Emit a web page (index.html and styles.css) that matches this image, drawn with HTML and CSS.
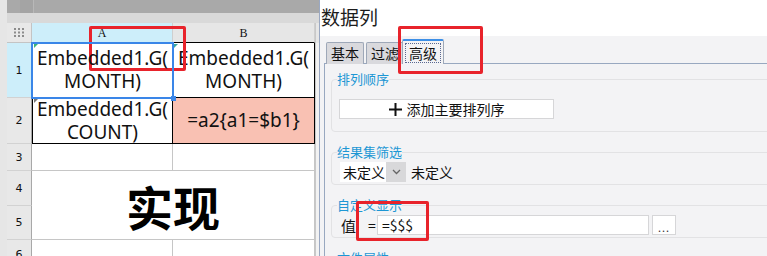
FILE: index.html
```html
<!DOCTYPE html>
<html lang="zh">
<head>
  <meta charset="UTF-8" />
  <title>数据列</title>
  <link rel="stylesheet" href="styles.css">
</head>
<body>
  <div class="app">
    <div class="strip"></div>

    <div class="sheet">
      <div class="toolbar"><span class="tb-seg"></span></div>
      <div class="subbar"></div>
      <div class="grid">
        <div class="corner">
          <svg width="10" height="9" viewBox="0 0 10 9">
            <g fill="#8c8c8c">
              <rect x="0" y="0" width="2" height="2"/><rect x="4" y="0" width="2" height="2"/><rect x="8" y="0" width="2" height="2"/>
              <rect x="0" y="3.5" width="2" height="2"/><rect x="4" y="3.5" width="2" height="2"/><rect x="8" y="3.5" width="2" height="2"/>
              <rect x="0" y="7" width="2" height="2"/><rect x="4" y="7" width="2" height="2"/><rect x="8" y="7" width="2" height="2"/>
            </g>
          </svg>
        </div>
        <div class="colhead sel">A</div>
        <div class="colhead">B</div>
        <div class="rest head"></div>

        <div class="rowhead sel">1</div>
        <div class="cell data first selected"><i class="flag green"></i>Embedded1.G(<br>MONTH)</div>
        <div class="cell data"><i class="flag teal"></i>Embedded1.G(<br>MONTH)</div>
        <div class="rest"></div>

        <div class="rowhead">2</div>
        <div class="cell data first"><i class="flag grey"></i>Embedded1.G(<br>COUNT)</div>
        <div class="cell data pink">=a2{a1=$b1}</div>
        <div class="rest"></div>

        <div class="rowhead">3</div>
        <div class="cell"></div>
        <div class="cell"></div>
        <div class="rest"></div>

        <div class="rowhead">4</div>
        <div class="cell merged">实现</div>
        <div class="rest"></div>

        <div class="rowhead">5</div>
        <div class="rest"></div>

        <div class="rowhead">6</div>
        <div class="cell"></div>
        <div class="cell"></div>
        <div class="rest"></div>
      </div>
    </div>

    <div class="panel">
      <div class="panel-title">数据列</div>
      <div class="tabs">
        <div class="tab">基本</div>
        <div class="tab">过滤</div>
        <div class="tab active"><span>高级</span></div>
      </div>
      <div class="tab-body">
        <fieldset class="group first-group">
          <legend>排列顺序</legend>
          <div class="add-btn">
            <svg width="13" height="13" viewBox="0 0 13 13"><path d="M6.5 0v13M0 6.5h13" stroke="#111" stroke-width="2"/></svg>
            添加主要排列序
          </div>
        </fieldset>

        <fieldset class="group">
          <legend>结果集筛选</legend>
          <div class="row">
            <div class="select">
              <span class="select-text">未定义</span>
              <span class="select-arrow">
                <svg width="9" height="6" viewBox="0 0 9 6"><path d="M1 1l3.5 3.5L8 1" fill="none" stroke="#666" stroke-width="1.3"/></svg>
              </span>
            </div>
            <span class="plain">未定义</span>
          </div>
        </fieldset>

        <fieldset class="group">
          <legend>自定义显示</legend>
          <div class="row">
            <span class="val-label">值</span>
            <span class="eq">=</span>
            <div class="input">=$$$</div>
            <div class="dots-btn">...</div>
          </div>
        </fieldset>

        <fieldset class="group">
          <legend>文件属性</legend>
          <div class="row"></div>
        </fieldset>
      </div>
    </div>
  </div>

  <div class="mark mark-a"></div>
  <div class="mark mark-tab"></div>
  <div class="mark mark-eq"></div>
</body>
</html>
```

FILE: styles.css
```css
body { margin: 0; position: relative; width: 767px; height: 256px; overflow: hidden; font-family: "Noto Sans", "Noto Sans CJK SC", sans-serif; color: #111; }
.app { display: grid; grid-template-columns: 7px 312px 1fr; height: 256px; }
.strip { background: #e6e6e6; }

/* spreadsheet */
.sheet { display: flex; flex-direction: column; background: #fff; overflow: hidden; }
.sheet > div { flex-shrink: 0; }
.toolbar { height: 13px; background: #a9a9a9; display: flex; }
.tb-seg { width: 13px; margin-left: 13px; background: #a4a4a4; border-right: 1px solid #b8b8b8; }
.subbar { height: 10px; background: #d9d9d9; }
.grid { display: grid; grid-template-columns: 25px 141px 142px 1fr; grid-template-rows: 20px 55px 46px 27px 35px 34px 30px; }
.grid > div { box-sizing: border-box; }
.corner { background: #e8e8e8; border-right: 1px solid #c4c4c4; border-bottom: 1px solid #c4c4c4; display: flex; align-items: center; justify-content: center; }
.colhead { background: #e6e6e6; border-right: 1px solid #cfcfcf; border-bottom: 1px solid #000; font-family: "Liberation Serif", serif; font-size: 12px; display: flex; align-items: center; justify-content: center; padding-top: 2px; }
.colhead.sel { background: #cdeefa; }
.rest { background: #f2f2f2; border-left: 1px solid #c8c8c8; }
.rest.head { background: #e6e6e6; }
.rowhead { background: #e8e8e8; border-right: 1px solid #a8a8a8; border-bottom: 1px solid #d2d2d2; font-family: "DejaVu Sans", sans-serif; font-size: 11px; display: flex; align-items: center; justify-content: center; }
.rowhead.sel { background: #cdeefa; }
.cell { border-right: 1px solid #c6c6c6; border-bottom: 1px solid #c6c6c6; position: relative; }
.cell.data { border-color: #000; font-size: 19px; line-height: 23px; text-align: center; display: flex; align-items: center; justify-content: center; white-space: nowrap; }
.cell.first { border-left: 1px solid #000; }
.cell.pink { background: #f9c1b3; }
.cell.selected { outline: 2px solid #3a86e8; outline-offset: -1px; z-index: 1; }
.cell.selected::after { content: ""; position: absolute; right: -4px; bottom: -4px; width: 5px; height: 5px; background: #3a86e8; }
.flag { position: absolute; left: 1px; top: 1px; width: 0; height: 0; border-top: 4px solid #777; border-right: 4px solid transparent; }
.flag.green { border-top-color: #3bb37a; }
.flag.teal { border-top-color: #3aa8a0; }
.cell.merged { grid-column: 2 / 4; grid-row: 5 / 7; border-left: 0; font-family: "Noto Sans CJK SC", sans-serif; font-weight: 700; font-size: 47px; display: flex; align-items: center; justify-content: center; color: #000; }

/* panel */
.panel { background: #f3f3f5; border-left: 1px solid #9aa8c2; overflow: hidden; font-family: "Noto Sans CJK SC", sans-serif; }
.panel-title { background: #fff; height: 36px; font-size: 19px; line-height: 33px; padding-left: 1px; color: #1c1c1c; }
.tabs { display: flex; align-items: flex-end; height: 28px; padding-left: 6px; margin-bottom: -1px; }
.tab { box-sizing: border-box; height: 22px; padding: 0 4px; margin-right: 2px; background: #d9d9dd; border: 1px solid #9ea8b8; border-bottom: 0; border-radius: 2px 2px 0 0; font-size: 14px; line-height: 20px; color: #111; }
.tab.active { position: relative; z-index: 1; height: 25px; margin-left: -4px; padding: 2px 2px 0; background: #f3f3f5; border-top: 2px solid #3d8fe6; }
.tab.active span { display: block; padding: 0 3px; border: 1px dotted #5a6890; line-height: 18px; }
.tab-body { width: 480px; margin-left: 4px; border-top: 1px solid #98a8c0; border-left: 1px solid #98a8c0; padding: 7px 0 0 6px; height: 200px; }

.group { margin: 0 0 12px; padding: 2px 0 2px 5px; border: 1px solid #e2e2e4; border-radius: 4px; }
.group legend { padding: 0; font-size: 13px; line-height: 16px; color: #1d97d4; }
.first-group { padding-top: 12px; padding-bottom: 12px; }

.add-btn { margin-left: 2px; width: 215px; height: 20px; box-sizing: border-box; background: #fff; border: 1px solid #d6d6d8; display: flex; align-items: center; justify-content: center; gap: 5px; font-size: 14px; }
.row { display: flex; align-items: center; height: 20px; margin-left: 3px; }
.select { display: flex; height: 20px; background: #fff; }
.select-text { width: 46px; font-size: 14px; line-height: 20px; padding-left: 3px; box-sizing: border-box; }
.select-arrow { width: 20px; background: #d8d8da; display: flex; align-items: center; justify-content: center; }
.plain { margin-left: 5px; font-size: 14px; }
.val-label { font-size: 15px; width: 27px; padding-left: 1px; }
.eq { font-size: 14px; width: 9px; }
.input { box-sizing: border-box; width: 272px; height: 20px; background: #fff; border: 1px solid #d6d6d8; font-size: 14px; line-height: 18px; padding-left: 4px; }
.dots-btn { box-sizing: border-box; width: 24px; height: 20px; margin-left: 3px; background: #fff; border: 1px solid #d6d6d8; font-size: 11px; line-height: 22px; text-align: center; letter-spacing: 1px; color: #333; }

/* red annotations */
.mark { position: absolute; border: 3px solid #e8232b; border-radius: 2px; box-sizing: border-box; }
.mark-a { left: 89px; top: 26px; width: 97px; height: 45px; }
.mark-tab { left: 398px; top: 26px; width: 85px; height: 48px; }
.mark-eq { left: 356px; top: 201px; width: 73px; height: 40px; }
```
